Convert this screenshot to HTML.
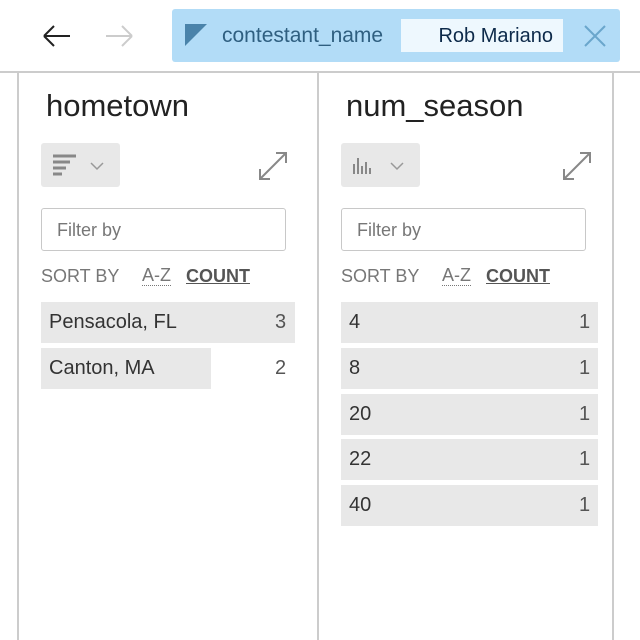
<!DOCTYPE html><html><head><style>
body{margin:0;width:640px;height:640px;background:#fff;font-family:"Liberation Sans",sans-serif;position:relative;overflow:hidden}
.a{position:absolute}
.t{color:#222;font-size:31px}
.row{position:absolute;height:41px;background:#e8e8e8;font-size:20px;color:#333;line-height:41px}
.row span{position:absolute;left:8px}
.c{position:absolute;font-size:20px;color:#555;line-height:41px}
.inp{position:absolute;width:245px;height:43px;border:1px solid #c8c8c8;border-radius:3px;font-size:18px;color:#777;line-height:43px;box-sizing:border-box;padding-left:15px}
.sb{position:absolute;font-size:18px;color:#777}
.btn{position:absolute;width:79px;height:44px;background:#e8e8e8;border-radius:3px}
</style></head><body>
<svg class="a" style="left:40px;top:20px" width="32" height="32"><path d="M4 16H30M4 16L14 6M4 16L14 26" stroke="#222" stroke-width="2" fill="none"/></svg>
<svg class="a" style="left:104px;top:20px" width="32" height="32"><path d="M2 16H28M28 16L18 6M28 16L18 26" stroke="#ccc" stroke-width="2" fill="none"/></svg>
<div class="a" style="left:172px;top:9px;width:448px;height:53px;background:#b2dcf7;border-radius:3px"></div>
<svg class="a" style="left:185px;top:24px" width="24" height="24"><path d="M0 0H22L0 22Z" fill="#4a83aa"/></svg>
<div class="a" style="left:222px;top:24px;font-size:21px;color:#2f5f80">contestant_name</div>
<div class="a" style="left:401px;top:19px;width:162px;height:33px;background:#eef8fe;font-size:20px;color:#0d2a4a;line-height:35px;text-align:right;box-sizing:border-box;padding-right:10px">Rob Mariano</div>
<svg class="a" style="left:583px;top:24px" width="24" height="24"><path d="M2 2L22 22M22 2L2 22" stroke="#6aa6cc" stroke-width="2"/></svg>
<div class="a" style="left:0;top:71px;width:640px;height:2px;background:#ccc"></div>
<div class="a" style="left:17px;top:72px;width:2px;height:568px;background:#ccc"></div>
<div class="a" style="left:317px;top:72px;width:2px;height:568px;background:#ccc"></div>
<div class="a" style="left:612px;top:72px;width:2px;height:568px;background:#ccc"></div>

<div class="a t" style="left:46px;top:88px">hometown</div>
<div class="btn" style="left:41px;top:143px"></div>
<svg class="a" style="left:52px;top:152px" width="60" height="26"><path d="M1 4H24M1 10H18M1 16H14M1 22H10" stroke="#888" stroke-width="3"/><path d="M39 11L45 17L51 11" stroke="#999" stroke-width="1.5" fill="none"/></svg>
<svg class="a" style="left:258px;top:151px" width="30" height="30"><path d="M2 28L28 2M18 2H28V12M2 18V28H12" stroke="#888" stroke-width="2" fill="none"/></svg>
<div class="inp" style="left:41px;top:208px">Filter by</div>
<div class="sb" style="left:41px;top:266px">SORT BY</div>
<div class="sb" style="left:142px;top:266px;border-bottom:1px dotted #777;line-height:19px">A-Z</div>
<div class="sb" style="left:186px;top:266px;font-weight:bold;color:#555;text-decoration:underline">COUNT</div>
<div class="row" style="left:41px;top:302px;width:254px"><span>Pensacola, FL</span></div><div class="c" style="left:275px;top:302px">3</div>
<div class="row" style="left:41px;top:348px;width:170px"><span>Canton, MA</span></div><div class="c" style="left:275px;top:348px">2</div>

<div class="a t" style="left:346px;top:88px">num_season</div>
<div class="btn" style="left:341px;top:143px"></div>
<svg class="a" style="left:352px;top:152px" width="60" height="26"><path d="M2 12V22M6 6V22M10 14V22M14 10V22M18 16V22" stroke="#888" stroke-width="2"/><path d="M39 11L45 17L51 11" stroke="#999" stroke-width="1.5" fill="none"/></svg>
<svg class="a" style="left:562px;top:151px" width="30" height="30"><path d="M2 28L28 2M18 2H28V12M2 18V28H12" stroke="#888" stroke-width="2" fill="none"/></svg>
<div class="inp" style="left:341px;top:208px">Filter by</div>
<div class="sb" style="left:341px;top:266px">SORT BY</div>
<div class="sb" style="left:442px;top:266px;border-bottom:1px dotted #777;line-height:19px">A-Z</div>
<div class="sb" style="left:486px;top:266px;font-weight:bold;color:#555;text-decoration:underline">COUNT</div>
<div class="row" style="left:341px;top:302px;width:257px"><span>4</span></div><div class="c" style="left:579px;top:302px">1</div>
<div class="row" style="left:341px;top:348px;width:257px"><span>8</span></div><div class="c" style="left:579px;top:348px">1</div>
<div class="row" style="left:341px;top:394px;width:257px"><span>20</span></div><div class="c" style="left:579px;top:394px">1</div>
<div class="row" style="left:341px;top:439px;width:257px"><span>22</span></div><div class="c" style="left:579px;top:439px">1</div>
<div class="row" style="left:341px;top:485px;width:257px"><span>40</span></div><div class="c" style="left:579px;top:485px">1</div>
</body></html>
